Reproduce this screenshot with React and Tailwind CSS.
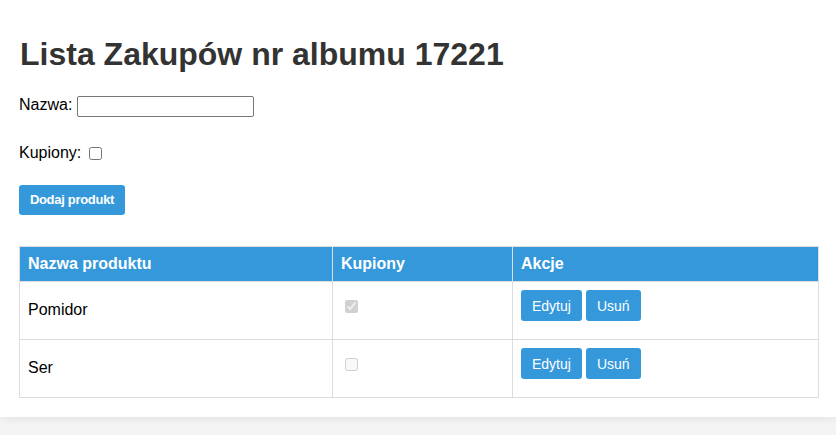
import React from "react";

const rows = [
  { name: "Pomidor", bought: true },
  { name: "Ser", bought: false },
];

function ActionButton({ children }) {
  return (
    <button className="h-[31px] px-[11px] flex items-center justify-center rounded-[3px] bg-[#3498db] text-white text-[14px] leading-[16px]">
      {children}
    </button>
  );
}

export default function App() {
  return (
    <div className="min-h-screen bg-[#f4f4f4] font-['Liberation_Sans',Arial,sans-serif] text-black">
      <div className="bg-white h-[417px] pt-[36px] pl-[19px] pr-[17px] shadow-[0_0_10px_rgba(0,0,0,0.1)] flex flex-col">
        <h1 className="text-[32px] leading-[37px] h-[37px] font-bold text-[#333] pl-[1px]">
          Lista Zakupów nr albumu 17221
        </h1>

        <div className="mt-[22px] h-[22px] flex items-start">
          <label className="text-[16px] leading-[18px] whitespace-pre pt-[1px]">Nazwa: </label>
          <input
            type="text"
            className="mt-[1px] w-[177px] h-[21px] border border-[#767676] rounded-[2px] bg-white px-[2px] text-[13px] outline-none"
          />
        </div>

        <div className="mt-[27px] h-[18px] flex items-start">
          <label className="text-[16px] leading-[18px]">Kupiony:</label>
          <input type="checkbox" className="ml-[8px] mt-[3px] w-[13px] h-[13px] m-0" />
        </div>

        <div className="mt-[23px]">
          <button className="w-[106px] h-[30px] flex items-center justify-center rounded-[3px] bg-[#3498db] text-white text-[13px] font-bold tracking-[-0.3px]">
            Dodaj produkt
          </button>
        </div>

        <div className="mt-[31px] w-[800px] border-l border-t border-[#ddd]">
          <div className="flex h-[35px] bg-[#3498db] text-white font-bold text-[16px]">
            <div className="w-[313px] border-r border-b border-[#ddd] px-[8px] pt-[8px] leading-[18px]">Nazwa produktu</div>
            <div className="w-[180px] border-r border-b border-[#ddd] px-[8px] pt-[8px] leading-[18px]">Kupiony</div>
            <div className="w-[306px] border-r border-b border-[#ddd] px-[8px] pt-[8px] leading-[18px]">Akcje</div>
          </div>
          {rows.map((r) => (
            <div key={r.name} className="flex h-[58px] text-[16px]">
              <div className="w-[313px] border-r border-b border-[#ddd] px-[8px] pt-[19px] leading-[18px]">{r.name}</div>
              <div className="w-[180px] border-r border-b border-[#ddd] pl-[12px] pt-[18px]">
                <input type="checkbox" disabled defaultChecked={r.bought} className="block w-[13px] h-[13px] m-0" />
              </div>
              <div className="w-[306px] border-r border-b border-[#ddd] px-[8px] pt-[8px] flex items-start gap-[4px]">
                <ActionButton>Edytuj</ActionButton>
                <ActionButton>Usuń</ActionButton>
              </div>
            </div>
          ))}
        </div>
      </div>
    </div>
  );
}
